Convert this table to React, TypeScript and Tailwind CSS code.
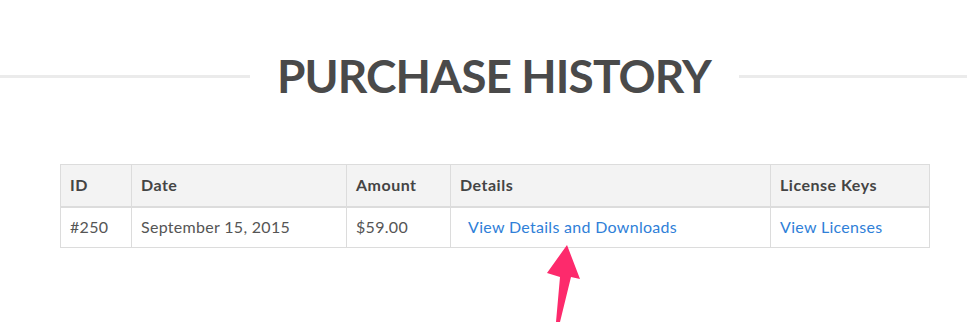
import React from "react";

export default function App() {
  return (
    <div className="w-[967px] h-[330px] bg-white relative overflow-hidden" style={{ fontFamily: "Lato, 'Open Sans', sans-serif" }}>
      <div className="flex items-center pt-[50px]">
        <div className="w-[250px] h-[3px] bg-[#ebebeb]" />
        <h1 className="ml-[27px] mr-[28px] text-[46px] leading-[52px] font-bold text-[#4a4a4a] tracking-[-0.9px] whitespace-nowrap">
          PURCHASE HISTORY
        </h1>
        <div className="flex-1 h-[3px] bg-[#ebebeb]" />
      </div>
      <div className="pl-[60px] pt-[62px]">
        <table className="w-[870px] border-collapse text-[16px]">
          <thead>
            <tr className="bg-[#f3f3f3] h-[42px] text-left text-[#444] font-bold tracking-[0.5px]">
              <th className="w-[71px] border border-[#dcdcdc] border-b-2 px-[9px] font-bold">ID</th>
              <th className="w-[215px] border border-[#dcdcdc] border-b-2 px-[9px] font-bold">Date</th>
              <th className="w-[104px] border border-[#dcdcdc] border-b-2 px-[9px] font-bold">Amount</th>
              <th className="w-[320px] border border-[#dcdcdc] border-b-2 px-[9px] font-bold">Details</th>
              <th className="border border-[#dcdcdc] border-b-2 px-[9px] font-bold">License Keys</th>
            </tr>
          </thead>
          <tbody>
            <tr className="h-[41px] text-[#555] tracking-[0.3px]">
              <td className="border border-[#dcdcdc] px-[9px]">#250</td>
              <td className="border border-[#dcdcdc] px-[9px]">September 15, 2015</td>
              <td className="border border-[#dcdcdc] px-[9px]">$59.00</td>
              <td className="border border-[#dcdcdc] pl-[17px] pr-[9px]">
                <a className="text-[#2f80d8]">View Details and Downloads</a>
              </td>
              <td className="border border-[#dcdcdc] px-[9px]">
                <a className="text-[#2f80d8]">View Licenses</a>
              </td>
            </tr>
          </tbody>
        </table>
      </div>
      <svg className="absolute left-[540px] top-[240px]" width="50" height="90" viewBox="540 240 50 90">
        <polygon points="567,245 580,279 571,277 560,322 556,322 560,277 547,273" fill="#fd2a6c" />
      </svg>
    </div>
  );
}
